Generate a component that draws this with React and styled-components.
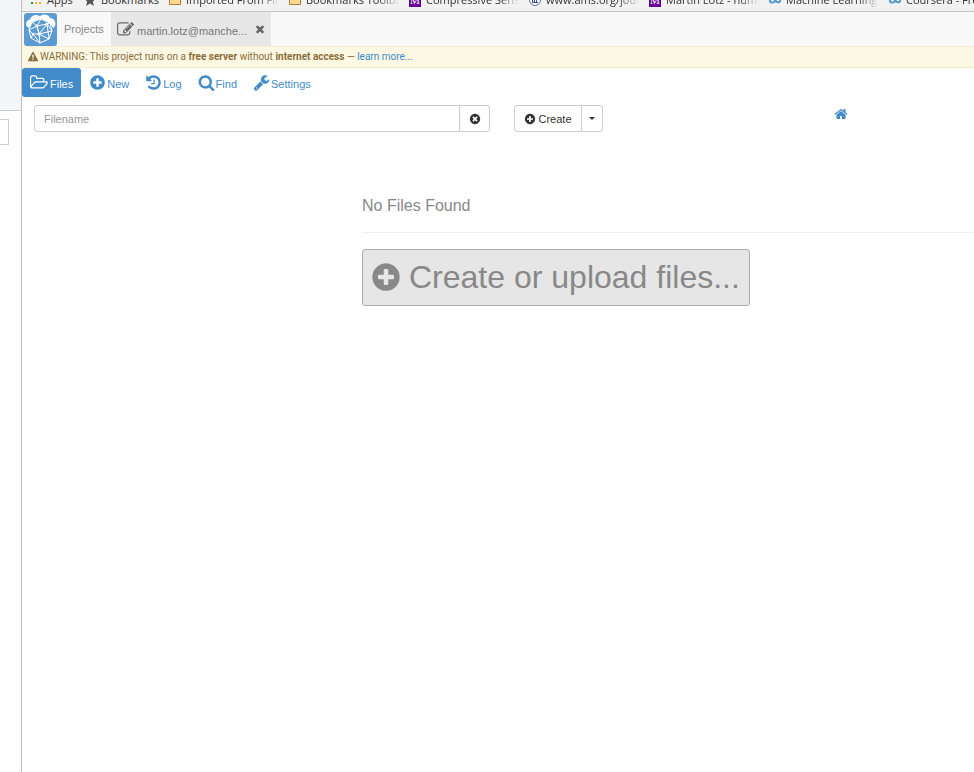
import React from "react";
import styled, { createGlobalStyle, css } from "styled-components";

const GlobalStyle = createGlobalStyle`
  *, *::before, *::after { box-sizing: border-box; }
  body {
    margin: 0;
    background: #fff;
    color: #333;
    font-family: "Liberation Sans", Arial, sans-serif;
    font-size: 11px;
    line-height: 16px;
  }
  button, input { font: inherit; }
  a { color: #428bca; text-decoration: none; }
`;

const CIRCLE =
  "q0 209-103 385.5t-279.5 279.5-385.5 103-385.5-103-279.5-279.5-103-385.5 103-385.5 279.5-279.5 385.5-103 385.5 103 279.5 279.5 103 385.5z";

const ICONS = {
  plus: "M1344 960v-128q0-26-19-45t-45-19h-256v-256q0-26-19-45t-45-19h-128q-26 0-45 19t-19 45v256h-256q-26 0-45 19t-19 45v128q0 26 19 45t45 19h256v256q0 26 19 45t45 19h128q26 0 45-19t19-45v-256h256q26 0 45-19t19-45zm320-64" + CIRCLE,
  clear: "M1277 1122q0-26-19-45l-181-181 181-181q19-19 19-45 0-27-19-46l-90-90q-19-19-46-19-26 0-45 19l-181 181-181-181q-19-19-45-19-27 0-46 19l-90 90q-19 19-19 46 0 26 19 45l181 181-181 181q-19 19-19 45 0 27 19 46l90 90q19 19 46 19 26 0 45-19l181-181 181 181q19 19 45 19 27 0 46-19l90-90q19-19 19-46zm387-226" + CIRCLE,
  close: "M1490 1322q0 40-28 68l-136 136q-28 28-68 28t-68-28l-294-294-294 294q-28 28-68 28t-68-28l-136-136q-28-28-28-68t28-68l294-294-294-294q-28-28-28-68t28-68l136-136q28-28 68-28t68 28l294 294 294-294q28-28 68-28t68 28l136 136q28 28 28 68t-28 68l-294 294 294 294q28 28 28 68z",
  history: "M1664 896q0 156-61 298t-164 245-245 164-298 61q-172 0-327-72.5t-264-204.5q-7-10-6.5-22.5t8.5-20.5l137-138q10-9 25-9 16 2 23 12 73 95 179 147t225 52q104 0 198.5-40.5t163.5-109.5 109.5-163.5 40.5-198.5-40.5-198.5-109.5-163.5-163.5-109.5-198.5-40.5q-98 0-188 35.5t-160 101.5l137 138q31 30 14 69-17 40-59 40h-448q-26 0-45-19t-19-45v-448q0-42 40-59 39-17 69 14l130 129q107-101 244.5-156.5t284.5-55.5q156 0 298 61t245 164 164 245 61 298zm-640-288v448q0 14-9 23t-23 9h-320q-14 0-23-9t-9-23v-64q0-14 9-23t23-9h224v-352q0-14 9-23t23-9h64q14 0 23 9t9 23z",
  search: "M1216 832q0-185-131.5-316.5t-316.5-131.5-316.5 131.5-131.5 316.5 131.5 316.5 316.5 131.5 316.5-131.5 131.5-316.5zm512 832q0 52-38 90t-90 38q-54 0-90-38l-343-342q-179 124-399 124-143 0-273.5-55.5t-225-150-150-225-55.5-273.5 55.5-273.5 150-225 225-150 273.5-55.5 273.5 55.5 225 150 150 225 55.5 273.5q0 220-124 399l343 343q37 37 37 90z",
  wrench: "M448 1472q0-26-19-45t-45-19-45 19-19 45 19 45 45 19 45-19 19-45zm644-420l-682 682q-37 37-90 37-52 0-91-37l-106-108q-38-36-38-90 0-53 38-91l681-681q39 98 114.5 173.5t173.5 114.5zm634-435q0 39-23 106-47 134-164.5 217.5t-258.5 83.5q-185 0-316.5-131.5t-131.5-316.5 131.5-316.5 316.5-131.5q58 0 121.5 16.5t107.5 46.5q16 11 16 28t-16 28l-293 169v224l193 107q5-3 79-48.5t135.5-81 70.5-35.5q15 0 23.5 10t8.5 25z",
  home: "M1472 992v480q0 26-19 45t-45 19h-384v-384h-256v384h-384q-26 0-45-19t-19-45v-480q0-1 .5-3t.5-3l575-474 575 474q1 2 1 6zm223-69l-62 74q-8 9-21 11h-3q-13 0-21-7l-692-577-692 577q-12 8-24 7-13-2-21-11l-62-74q-8-10-7-23.5t11-21.5l719-599q32-26 76-26t76 26l244 204v-195q0-14 9-23t23-9h192q14 0 23 9t9 23v408l219 182q10 8 11 21.5t-7 23.5z",
  folder: "M1781 931q0-35-53-35h-1088q-40 0-85.5 21.5t-71.5 52.5l-294 363q-18 24-18 40 0 35 53 35h1088q40 0 86-22t71-53l294-363q18-22 18-39zm-1141-163h768v-160q0-40-28-68t-68-28h-576q-40 0-68-28t-28-68v-64q0-40-28-68t-68-28h-320q-40 0-68 28t-28 68v853l256-315q44-53 116-87.5t140-34.5zm1269 163q0 62-46 120l-295 363q-43 53-116 87.5t-140 34.5h-1088q-92 0-158-66t-66-158v-960q0-92 66-158t158-66h320q92 0 158 66t66 158v32h544q92 0 158 66t66 158v160h192q54 0 99 24.5t67 70.5q15 32 15 68z",
  edit: "M888 1184l116-116-152-152-116 116v56h96v96h56zm440-720q-16-16-33 1l-350 350q-17 17-1 33t33-1l350-350q17-17 1-33zm80 594v190q0 119-84.5 203.5t-203.5 84.5h-832q-119 0-203.5-84.5t-84.5-203.5v-832q0-119 84.5-203.5t203.5-84.5h832q63 0 117 25 15 7 18 23 3 17-9 29l-49 49q-14 14-32 8-23-6-45-6h-832q-66 0-113 47t-47 113v832q0 66 47 113t113 47h832q66 0 113-47t47-113v-126q0-13 9-22l64-64q15-15 35-7t20 29zm-96-738l288 288-672 672h-288v-288zm444 132l-92 92-288-288 92-92q28-28 68-28t68 28l152 152q28 28 28 68t-28 68z",
  warning: "M1024 1375v-190q0-14-9.5-23.5t-22.5-9.5h-192q-13 0-22.5 9.5t-9.5 23.5v190q0 14 9.5 23.5t22.5 9.5h192q13 0 22.5-9.5t9.5-23.5zm-2-374l18-459q0-12-10-19-13-11-24-11h-220q-11 0-24 11-10 7-10 21l17 457q0 10 10 16.5t24 6.5h185q14 0 23.5-6.5t10.5-16.5zm-14-934l768 1408q35 63-2 126-17 29-46.5 46t-63.5 17h-1536q-34 0-63.5-17t-46.5-46q-37-63-2-126l768-1408q17-31 47-49t65-18 65 18 47 49z",
};

const Svg = styled.svg`
  display: block;
  flex: none;
  fill: currentColor;
`;

function Icon({ name, size, wide }) {
  const width = wide ? Math.round((size * 1920) / 1792) : size;
  return (
    <Svg width={width} height={size} viewBox={wide ? "0 0 1920 1792" : "0 0 1792 1792"} aria-hidden="true">
      <path d={ICONS[name]} />
    </Svg>
  );
}

const Shell = styled.div`
  display: grid;
  grid-template-columns: 22px minmax(0, 1fr);
  min-height: 100vh;
`;

const SidePane = styled.aside`
  display: flex;
  flex-direction: column;
  border-right: 1px solid #c3beb7;
`;

const SideTop = styled.div`
  height: 111px;
  background: #f3f5f8;
  border-bottom: 1px solid #ccc;
`;

const SideBox = styled.div`
  width: 9px;
  height: 26px;
  margin-top: 8px;
  border: 1px solid #ccc;
  border-left: 0;
`;

const Page = styled.div`
  display: flex;
  flex-direction: column;
  min-width: 0;
`;

const Bookmarks = styled.nav`
  display: flex;
  align-items: flex-end;
  height: 12px;
  padding: 0 0 3px 8px;
  overflow: hidden;
  background: #f2f2f2;
  border-bottom: 1px solid #c4c4c4;
`;

const Bookmark = styled.a`
  display: flex;
  flex: none;
  align-items: center;
  gap: 5px;
  width: ${(p) => p.$width}px;
  padding-right: 10px;
  color: #333;
  font-family: "Open Sans", "Noto Sans", sans-serif;
  font-size: 11px;
`;

const BookmarkText = styled.span`
  flex: 1;
  white-space: nowrap;
  ${(p) => p.$fade && css`
    overflow: hidden;
    mask-image: linear-gradient(to right, #000 calc(100% - 20px), transparent);
  `}
`;

const Tile = styled.span`
  flex: none;
  width: 12px;
  height: 13px;
  background: #660099;
  color: #fff;
  font: 11px/13px "Liberation Serif", serif;
  text-align: center;
`;

const Tabs = styled.nav`
  display: flex;
  align-items: stretch;
  height: 34px;
  background: #f8f8f8;
  color: #808080;
`;

const Logo = styled.a`
  display: flex;
  align-items: center;
  padding: 0 2px;
`;

const ProjectsLink = styled.a`
  display: flex;
  align-items: center;
  width: 52px;
  padding-left: 5px;
  color: #888;
`;

const ProjectTab = styled.div`
  display: flex;
  align-items: center;
  gap: 3px;
  width: 160px;
  padding: 0 5px 0 6px;
  background: #e7e7e7;
  color: #666;
`;

const TabName = styled.a`
  flex: 1;
  min-width: 0;
  padding-top: 3px;
  color: #777;
  white-space: nowrap;
`;

const PlainButton = styled.button`
  padding: 0;
  border: 0;
  background: none;
  color: inherit;
`;

const Warning = styled.div`
  display: flex;
  align-items: center;
  gap: 2px;
  height: 22px;
  padding: 0 6px;
  background: #fcf8e3;
  border: solid #faebcc;
  border-width: 1px 0;
  color: #8a6d3b;
  font-family: Roboto, Arial, sans-serif;
  font-size: 10px;
`;

const Toolbar = styled.nav`
  display: flex;
`;

const Tool = styled.button`
  display: flex;
  align-items: center;
  gap: ${(p) => (p.$active ? 2 : 1)}px;
  height: 29px;
  padding: 0 8px;
  border: 0;
  border-radius: 3px;
  background: ${(p) => (p.$active ? "#428bca" : "transparent")};
  color: ${(p) => (p.$active ? "#fff" : "#428bca")};
`;

const ToolText = styled.span`
  padding-top: 3px;
`;

const Controls = styled.div`
  display: grid;
  grid-template-columns: 456px 320px minmax(0, 1fr);
  padding: 8px 12px 0;
`;

const Group = styled.div`
  display: flex;
  height: 27px;
`;

const Field = styled.input`
  flex: 1;
  min-width: 0;
  padding: 0 9px;
  border: 1px solid #ccc;
  border-radius: 3px 0 0 3px;
  color: #555;
  outline: 0;
  &::placeholder { color: #999; opacity: 1; }
`;

const Button = styled.button`
  display: flex;
  align-items: center;
  justify-content: center;
  gap: 2px;
  width: ${(p) => p.$width}px;
  margin-left: ${(p) => (p.$first ? 0 : -1)}px;
  padding: 0;
  border: 1px solid #ccc;
  border-radius: ${(p) => (p.$first ? "3px 0 0 3px" : "0 3px 3px 0")};
  background: #fff;
  color: #333;
`;

const CreateGroup = styled(Group)`
  margin-left: 24px;
`;

const Caret = styled.span`
  border: 3px solid transparent;
  border-top-color: #333;
  border-bottom: 0;
`;

const HomeLink = styled.a`
  justify-self: start;
  padding: 2px 24px;
`;

const Empty = styled.main`
  margin: 64px 0 0 340px;
  color: #888;
`;

const EmptyTitle = styled.h1`
  margin: 0;
  padding-bottom: 16px;
  border-bottom: 1px solid #eee;
  font-size: 16px;
  font-weight: 400;
  line-height: 20px;
`;

const BigButton = styled.button`
  display: flex;
  align-items: center;
  gap: 7px;
  height: 57px;
  margin-top: 16px;
  padding: 0 9px 2px 7px;
  border: 1px solid #adadad;
  border-radius: 3px;
  background: #e6e6e6;
  color: #888;
  font-size: 32px;
  line-height: 40px;
  white-space: nowrap;
`;

function AppsMark() {
  const colors = ["#db4437", "#f4b400", "#0f9d58", "#db4437", "#4285f4", "#0f9d58", "#0f9d58", "#f4b400", "#f4b400"];
  return (
    <Svg width="12" height="12" viewBox="0 0 12 12" aria-hidden="true">
      {colors.map((c, i) => (
        <rect key={i} x={(i % 3) * 4 + 1} y={Math.floor(i / 3) * 4} width="2" height="2" fill={c} />
      ))}
    </Svg>
  );
}

function StarMark() {
  return (
    <Svg width="12" height="12" viewBox="0 0 12 12" aria-hidden="true">
      <path fill="#555" d="M6 0l1.8 4.2 4.2.3-3.2 3 1.1 4.5L6 9.600l-3.900 2.400 1.100-4.500L0 4.500l4.200-.3z" />
    </Svg>
  );
}

function FolderMark() {
  return (
    <Svg width="12" height="12" viewBox="0 0 12 12" aria-hidden="true">
      <path fill="#f8d990" stroke="#a87c38" d="M.5 2.500h4l1 1h6v7H.5z" />
    </Svg>
  );
}

function CrestMark() {
  return (
    <Svg width="12" height="12" viewBox="0 0 12 12" aria-hidden="true">
      <circle cx="6" cy="6" r="5.500" fill="#fff" stroke="#5a6ea5" />
      <path stroke="#3d5292" d="M3.500 3v5M5.500 3v5M7.500 3v5M3 8.500h6" />
    </Svg>
  );
}

function LoopMark() {
  return (
    <Svg width="12" height="12" viewBox="0 0 13 12" aria-hidden="true">
      <path fill="none" stroke="#4a90cf" strokeWidth="2" d="M6.500 6C5 3.500 1 3.500 1 6.500S5 9.500 6.500 7s5.500-3.500 5.500-.5S8 9 6.500 6z" />
    </Svg>
  );
}

function CloudMark() {
  return (
    <Svg width="33" height="33" viewBox="0 0 33 33" role="img" aria-label="Home">
      <rect width="33" height="33" rx="3" fill="#5b9bd3" />
      <path fill="#fff" d="M5 15C1 14 1 7 6 6.500 7 2 13 .5 16 3.500 19 0 25 1.500 26 5c6 0 7 8 3 10l-3-5-9-4-9 3z" />
      <path fill="#5b9bd3" d="M17 6l9 4 2 8-3 8-9 4-9-5-2-8 3-8z" />
      <path fill="none" stroke="#fff" strokeLinejoin="round" d="M17 6l9 4 2 8-3 8-9 4-9-5-2-8 3-8zM8 9l5 4 10-2 3-1M17 6l-4 7 2 8 8-10M13 13l-8 4 4 4 6 0-2-8M9 21l-2 4M15 21l1 9M15 21l10 5-2-15 5 7-13 3M9 21l7 9" />
      <g fill="#fff"><circle cx="13" cy="13" r="1.500" /><circle cx="23" cy="11" r="1.500" /><circle cx="15" cy="21" r="1.500" /><circle cx="9" cy="21" r="1.200" /></g>
    </Svg>
  );
}

const bookmarks = [
  { text: "Apps", mark: <AppsMark />, width: 54 },
  { text: "Bookmarks", mark: <StarMark />, width: 85 },
  { text: "Imported From Firefox", mark: <FolderMark />, fade: true },
  { text: "Bookmarks Toolbar", mark: <FolderMark />, fade: true },
  { text: "Compressive Sensing", mark: <Tile>M</Tile>, fade: true },
  { text: "www.ams.org/journals", mark: <CrestMark />, fade: true },
  { text: "Martin Lotz - numerical", mark: <Tile>M</Tile>, fade: true },
  { text: "Machine Learning | Home", mark: <LoopMark />, fade: true },
  { text: "Coursera - Free Online", mark: <LoopMark />, fade: true },
];

const tools = [
  { text: "Files", icon: "folder", wide: true, active: true },
  { text: "New", icon: "plus" },
  { text: "Log", icon: "history" },
  { text: "Find", icon: "search" },
  { text: "Settings", icon: "wrench" },
];

export default function App() {
  return (
    <>
      <GlobalStyle />
      <Shell>
        <SidePane>
          <SideTop />
          <SideBox />
        </SidePane>
        <Page>
          <Bookmarks aria-label="Bookmarks">
            {bookmarks.map((b) => (
              <Bookmark key={b.text} href="#" $width={b.width || 120}>
                {b.mark}
                <BookmarkText $fade={b.fade}>{b.text}</BookmarkText>
              </Bookmark>
            ))}
          </Bookmarks>
          <Tabs aria-label="Projects">
            <Logo href="#"><CloudMark /></Logo>
            <ProjectsLink href="#">Projects</ProjectsLink>
            <ProjectTab>
              <Icon name="edit" size={17} />
              <TabName href="#">martin.lotz@manche...</TabName>
              <PlainButton aria-label="Close project"><Icon name="close" size={12} /></PlainButton>
            </ProjectTab>
          </Tabs>
          <Warning role="alert">
            <Icon name="warning" size={10} />
            <span>
              WARNING: This project runs on a <b>free server</b> without <b>internet access</b> — <a href="#">learn more...</a>
            </span>
          </Warning>
          <Toolbar aria-label="Project tools">
            {tools.map((t) => (
              <Tool key={t.text} $active={t.active}>
                <Icon name={t.icon} size={17} wide={t.wide} />
                <ToolText>{t.text}</ToolText>
              </Tool>
            ))}
          </Toolbar>
          <Controls>
            <Group>
              <Field type="text" placeholder="Filename" aria-label="Filename" />
              <Button $width={31} aria-label="Clear filename"><Icon name="clear" size={12} /></Button>
            </Group>
            <CreateGroup>
              <Button $first $width={68}><Icon name="plus" size={12} />Create</Button>
              <Button $width={22} aria-label="More create options"><Caret /></Button>
            </CreateGroup>
            <HomeLink href="#" aria-label="Home directory"><Icon name="home" size={14} /></HomeLink>
          </Controls>
          <Empty>
            <EmptyTitle>No Files Found</EmptyTitle>
            <BigButton><Icon name="plus" size={32} />Create or upload files...</BigButton>
          </Empty>
        </Page>
      </Shell>
    </>
  );
}
